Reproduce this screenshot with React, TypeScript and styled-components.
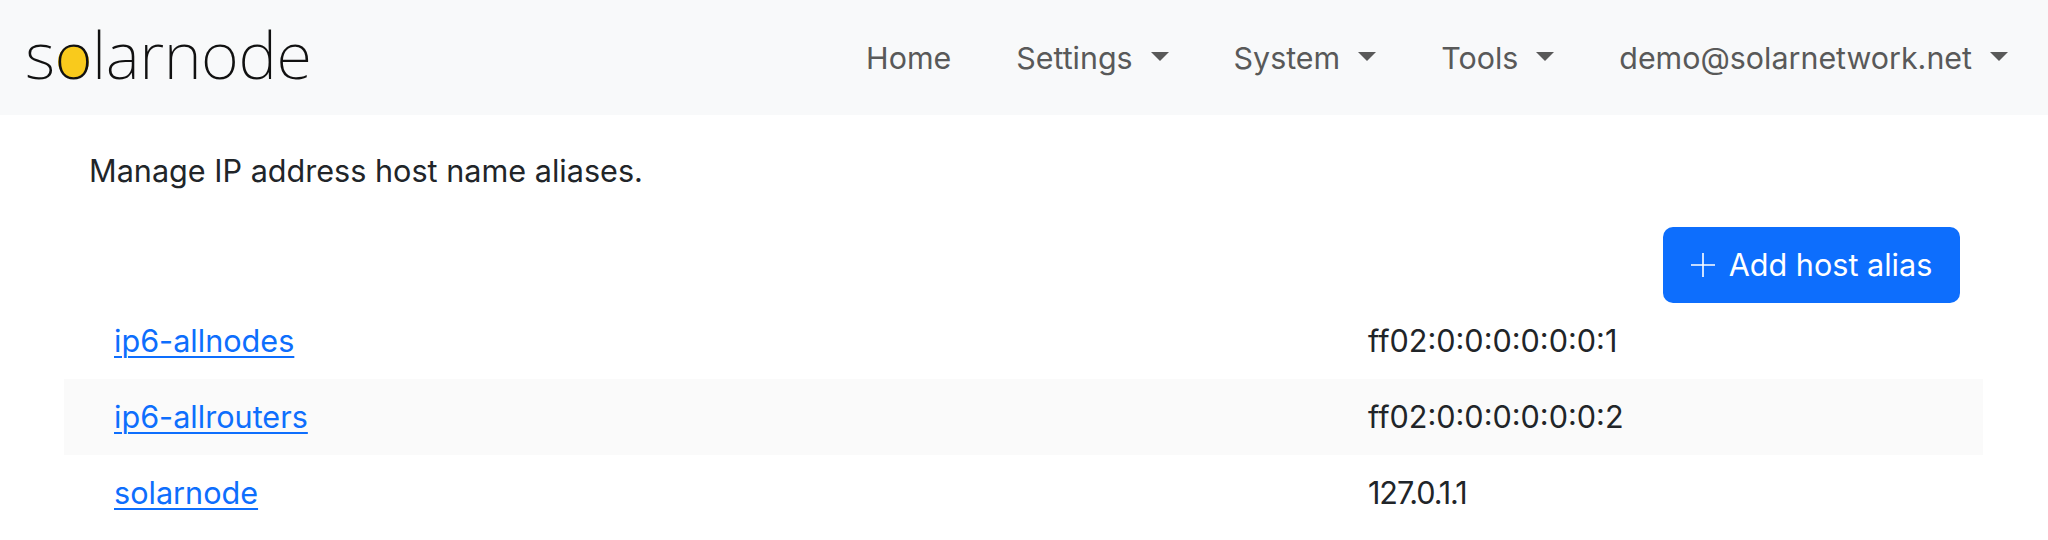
import React from "react";
import styled, { createGlobalStyle } from "styled-components";

const GlobalStyle = createGlobalStyle`
  html, body {
    margin: 0;
    padding: 0;
    background: #fff;
  }
  body {
    font-family: Inter, "Liberation Sans", sans-serif;
    font-size: 30.6px;
    line-height: 36px;
    color: #212529;
    overflow: hidden;
  }
`;

const hosts = [
  { name: "ip6-allnodes", address: "ff02:0:0:0:0:0:0:1" },
  { name: "ip6-allrouters", address: "ff02:0:0:0:0:0:0:2" },
  { name: "solarnode", address: "127.0.1.1", tight: true },
];

const navItems = [
  { label: "Home" },
  { label: "Settings", menu: true },
  { label: "System", menu: true },
  { label: "Tools", menu: true },
  { label: "demo@solarnetwork.net", menu: true },
];

const App: React.FC = () => {
  return (
    <>
      <GlobalStyle />
      <Navbar>
        <Brand>
          s<Sun>o</Sun>larnode
        </Brand>
        <NavList>
          {navItems.map((item) => (
            <NavLink key={item.label}>
              {item.label}
              {item.menu && <Caret />}
            </NavLink>
          ))}
        </NavList>
      </Navbar>
      <Main>
        <Intro>Manage IP address host name aliases.</Intro>
        <Actions>
          <AddButton>
            <svg width="24" height="24" viewBox="0 0 24 24" fill="none">
              <path d="M12 0v24M0 12h24" stroke="#fff" strokeWidth="1.6" />
            </svg>
            Add host alias
          </AddButton>
        </Actions>
        <Table>
          {hosts.map((host) => (
            <Row key={host.name}>
              <NameCell>
                <HostLink href="#">{host.name}</HostLink>
              </NameCell>
              <Address $tight={host.tight}>{host.address}</Address>
            </Row>
          ))}
        </Table>
      </Main>
    </>
  );
};

const Navbar = styled.nav`
  height: 115px;
  background: #f8f9fa;
  display: flex;
  align-items: center;
  justify-content: space-between;
  padding: 0 40px 0 25px;
`;

const Brand = styled.div`
  font-family: "Noto Sans", sans-serif;
  font-weight: 200;
  font-size: 65px;
  line-height: 70px;
  color: #111;
  letter-spacing: -0.4px;
  padding-bottom: 7px;
`;

const Sun = styled.span`
  position: relative;
  z-index: 0;
  &::before {
    content: "";
    position: absolute;
    z-index: -1;
    left: 3px;
    right: 3px;
    top: 35px;
    height: 33px;
    border-radius: 50%;
    background: #f9ca1c;
  }
`;

const NavList = styled.div`
  display: flex;
  gap: 65px;
  font-size: 30.4px;
`;

const NavLink = styled.a`
  display: flex;
  align-items: center;
  color: #595959;
  cursor: pointer;
`;

const Caret = styled.i`
  width: 0;
  height: 0;
  margin-left: 18px;
  margin-top: -3px;
  border-top: 9px solid #595959;
  border-left: 9px solid transparent;
  border-right: 9px solid transparent;
`;

const Main = styled.main`
  padding: 0 65px 0 64px;
`;

const Intro = styled.p`
  margin: 0;
  padding: 38px 25px 0;
`;

const Actions = styled.div`
  display: flex;
  justify-content: flex-end;
  padding: 38px 23px 0 0;
`;

const AddButton = styled.button`
  height: 76px;
  width: 297px;
  border: none;
  border-radius: 10px;
  background: #0d6efd;
  color: #fff;
  font: inherit;
  display: flex;
  align-items: center;
  justify-content: center;
  gap: 14px;
`;

const Table = styled.div`
  display: flex;
  flex-direction: column;
`;

const Row = styled.div`
  height: 76px;
  display: flex;
  align-items: center;
  padding-left: 50px;
  &:nth-child(even) {
    background: #fafafa;
  }
`;

const NameCell = styled.div`
  width: 1254px;
`;

const Address = styled.span<{ $tight?: boolean }>`
  letter-spacing: ${(props) => (props.$tight ? "-1.1px" : "normal")};
`;

const HostLink = styled.a`
  color: #0d6efd;
  text-decoration: underline;
  text-decoration-thickness: 2px;
  text-underline-offset: 4px;
`;

export default App;
